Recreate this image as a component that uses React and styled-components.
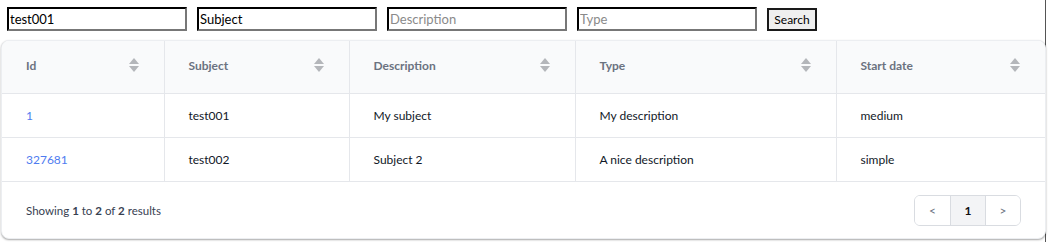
import React from "react";
import styled, { createGlobalStyle } from "styled-components";

const GlobalStyle = createGlobalStyle`
  body {
    margin: 0;
    font-family: Lato, "Noto Sans", sans-serif;
    background: #fff;
  }
`;

const Page = styled.div`
  width: 1046px;
  height: 242px;
  box-sizing: border-box;
  border-right: 1px solid #555;
  padding: 7px 0 0 1px;
`;

const SearchForm = styled.form`
  display: flex;
  gap: 10px;
  padding-left: 6px;
  align-items: flex-start;
`;

const Field = styled.input`
  width: 180px;
  height: 24px;
  box-sizing: border-box;
  border: 2px inset #767676;
  border-color: #1a1a1a #777 #777 #1a1a1a;
  padding: 0 1px;
  font-family: Lato, "Noto Sans", sans-serif;
  font-size: 13px;
  color: #000;
  outline: none;
  &::placeholder {
    color: #8a8a8a;
  }
`;

const SearchButton = styled.button`
  height: 23px;
  width: 50px;
  margin-top: 1px;
  box-sizing: border-box;
  border: 2px solid #1a1a1a;
  background: #efefef;
  font-family: Lato, "Noto Sans", sans-serif;
  font-size: 12px;
  color: #000;
  padding: 0;
`;

const Card = styled.div`
  margin-top: 9px;
  width: 1045px;
  box-sizing: border-box;
  border: 1px solid #eceef1;
  border-radius: 8px;
  box-shadow: 0 1px 2px rgba(0, 0, 0, 0.35);
  overflow: hidden;
  background: #fff;
`;

const Table = styled.table`
  width: 100%;
  border-collapse: collapse;
  table-layout: fixed;
  font-size: 12px;
`;

const HeadCell = styled.th`
  height: 48px;
  background: #f9fafb;
  color: #6b7280;
  font-weight: 700;
  text-align: left;
  padding: 0 25px 4px 24px;
  border-left: 1px solid #e5e7eb;
  border-bottom: 1px solid #e5e7eb;
  &:first-child {
    border-left: none;
  }
`;

const HeadInner = styled.div`
  display: flex;
  align-items: center;
  justify-content: space-between;
`;

const Cell = styled.td`
  height: 43px;
  padding: 0 25px 0 24px;
  color: #111827;
  border-left: 1px solid #e5e7eb;
  border-bottom: 1px solid #e5e7eb;
  &:first-child {
    border-left: none;
  }
`;

const IdLink = styled.a`
  color: #4f7cf0;
  text-decoration: none;
`;

const Footer = styled.div`
  height: 56px;
  display: flex;
  align-items: center;
  justify-content: space-between;
  padding: 0 24px 0 24px;
  font-size: 11.5px;
  color: #374151;
`;

const Pager = styled.div`
  display: flex;
  border: 1px solid #d9dce1;
  border-radius: 6px;
  overflow: hidden;
`;

const PageButton = styled.button`
  width: 35px;
  height: 29px;
  border: none;
  border-left: ${(p) => (p.$first ? "none" : "1px solid #d9dce1")};
  background: ${(p) => (p.$active ? "#f3f4f6" : "#fff")};
  color: ${(p) => (p.$active ? "#111" : "#6b7280")};
  font-weight: ${(p) => (p.$active ? 700 : 400)};
  font-family: Lato, "Noto Sans", sans-serif;
  font-size: 12px;
  padding: 0;
`;

function SortIcon() {
  return (
    <svg width="10" height="14" viewBox="0 0 10 14">
      <path d="M5 0 L10 6 L0 6 Z" fill="#b4b6ba" />
      <path d="M5 14 L10 8 L0 8 Z" fill="#b4b6ba" />
    </svg>
  );
}

const columns = [
  { label: "Id", width: 162 },
  { label: "Subject", width: 185 },
  { label: "Description", width: 226 },
  { label: "Type", width: 261 },
  { label: "Start date", width: 209 },
];

const rows = [
  { id: "1", subject: "test001", description: "My subject", type: "My description", start: "medium" },
  { id: "327681", subject: "test002", description: "Subject 2", type: "A nice description", start: "simple" },
];

export default function App() {
  return (
    <>
      <GlobalStyle />
      <Page>
        <SearchForm onSubmit={(e) => e.preventDefault()}>
          <Field defaultValue="test001" />
          <Field defaultValue="Subject" />
          <Field placeholder="Description" />
          <Field placeholder="Type" />
          <SearchButton type="submit">Search</SearchButton>
        </SearchForm>
        <Card>
          <Table>
            <colgroup>
              {columns.map((c) => (
                <col key={c.label} style={{ width: c.width }} />
              ))}
            </colgroup>
            <thead>
              <tr>
                {columns.map((c) => (
                  <HeadCell key={c.label}>
                    <HeadInner>
                      <span>{c.label}</span>
                      <SortIcon />
                    </HeadInner>
                  </HeadCell>
                ))}
              </tr>
            </thead>
            <tbody>
              {rows.map((r) => (
                <tr key={r.id}>
                  <Cell>
                    <IdLink href="#">{r.id}</IdLink>
                  </Cell>
                  <Cell>{r.subject}</Cell>
                  <Cell>{r.description}</Cell>
                  <Cell>{r.type}</Cell>
                  <Cell>{r.start}</Cell>
                </tr>
              ))}
            </tbody>
          </Table>
          <Footer>
            <span>
              Showing <b>1</b> to <b>2</b> of <b>2</b> results
            </span>
            <Pager>
              <PageButton $first>&lt;</PageButton>
              <PageButton $active>1</PageButton>
              <PageButton>&gt;</PageButton>
            </Pager>
          </Footer>
        </Card>
      </Page>
    </>
  );
}
